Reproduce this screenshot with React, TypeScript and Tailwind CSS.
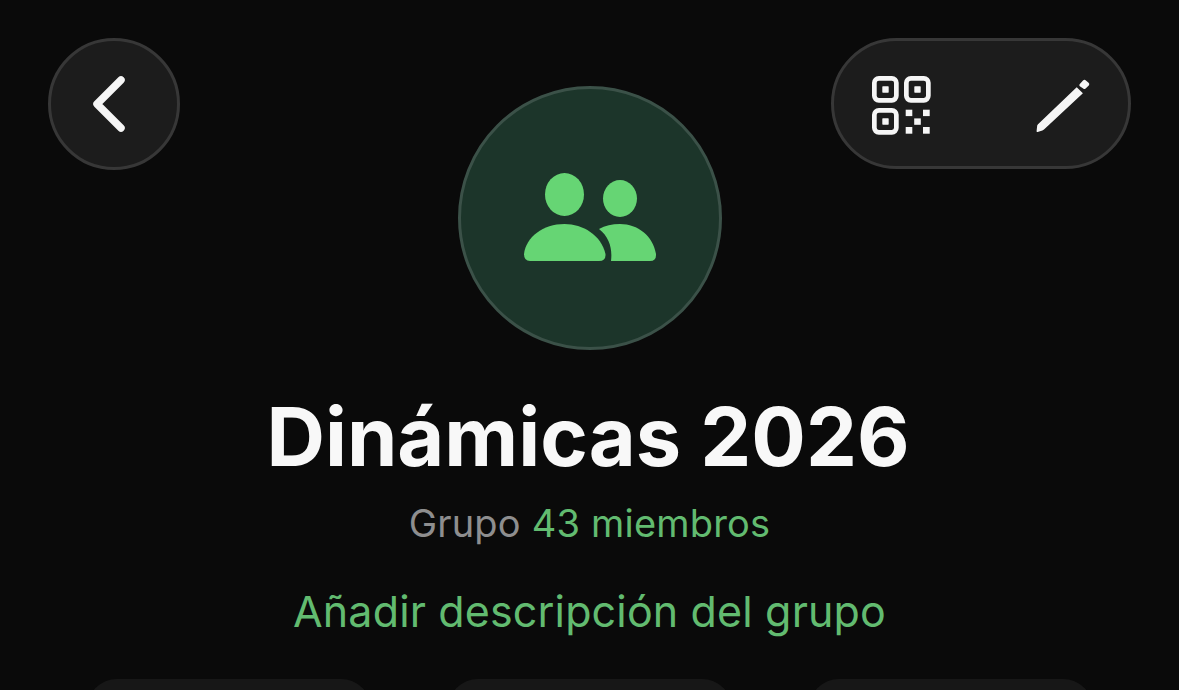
import React from "react";

const font = { fontFamily: "Inter, 'Noto Sans', sans-serif" };

function QrIcon() {
  return (
    <svg width="59" height="59" viewBox="0 0 59 59" fill="#f5f5f5">
      <g fill="none" stroke="#f5f5f5" strokeWidth="4.7">
        <rect x="2.35" y="2.35" width="22" height="22" rx="4.5" />
        <rect x="34.35" y="2.35" width="22" height="22" rx="4.5" />
        <rect x="2.35" y="34.35" width="22" height="22" rx="4.5" />
      </g>
      <rect x="10.3" y="10.3" width="6.4" height="6.4" rx="0.6" />
      <rect x="42.3" y="10.3" width="6.4" height="6.4" rx="0.6" />
      <rect x="10.3" y="42.3" width="6.4" height="6.4" rx="0.6" />
      <rect x="33.7" y="33.7" width="6.6" height="6.4" />
      <rect x="51" y="33.7" width="6.7" height="6.4" />
      <rect x="42.2" y="42.4" width="6.6" height="6.4" />
      <rect x="33.7" y="51" width="6.6" height="6.7" />
      <rect x="51" y="51" width="6.7" height="6.7" />
    </svg>
  );
}

function PencilIcon() {
  return (
    <svg width="54" height="54" viewBox="0 0 54 54" fill="#f5f5f5">
      <path d="M40.7 9.3 L46.9 15.2 L8 51.6 Q7.2 52.2 6.4 52.5 L1.6 53.9 Q0.3 54.2 0.6 52.9 L1.2 47.6 Q1.4 46.8 2 46.2 Z" />
      <path d="M43.6 6.2 L47 2.6 Q48.4 1.2 49.9 2.4 L52.6 4.7 Q54 6 52.8 7.5 L49.6 10.6 Q48.4 11.6 47.2 10.6 L43.8 8.2 Q42.9 7.2 43.6 6.2 Z" />
    </svg>
  );
}

function GroupIcon() {
  return (
    <svg width="134" height="90" viewBox="0 0 134 90" fill="#66d574">
      <ellipse cx="41.5" cy="21.5" rx="19.5" ry="21.5" />
      <ellipse cx="97" cy="25.5" rx="17" ry="18.5" />
      <path d="M7 88 Q1 88 1 81 C3 64 20 51 41.5 51 C60 51 78 62 82.5 81 Q83 88 76 88 Z" />
      <path d="M76 56 C82 52.5 89 51 97 51 C115 51 130 63 133 81 Q133.5 88 127 88 L88 88 C89.5 76 86.5 64 76 56 Z" />
    </svg>
  );
}

export default function App() {
  return (
    <div className="w-[1179px] h-[690px] overflow-hidden bg-[#0a0a0a] flex flex-col" style={font}>
      <div className="grid grid-cols-[1fr_auto_1fr] items-start px-[48px] pt-[38px]">
        <button className="w-[132px] h-[132px] rounded-full bg-[#1c1c1c] border-[3px] border-[#373737] flex items-center justify-center">
          <svg width="40" height="62" viewBox="0 0 40 62" fill="none" stroke="#f5f5f5" strokeWidth="7.5" strokeLinecap="round" strokeLinejoin="round" className="mr-[6px]">
            <path d="M30 7 L6 31 L30 55" />
          </svg>
        </button>
        <div className="pt-[48px]">
          <div className="w-[264px] h-[264px] rounded-full bg-[#1c352a] border-[3px] border-[#3b5148] flex items-center justify-center">
            <GroupIcon />
          </div>
        </div>
        <div className="flex justify-end">
          <div className="w-[300px] h-[131px] rounded-full bg-[#1c1c1c] border-[3px] border-[#373737] flex items-center justify-between pl-[38px] pr-[38px] pt-[3px]">
            <QrIcon />
            <PencilIcon />
          </div>
        </div>
      </div>
      <h1 className="mt-[41px] pr-[3px] text-center text-[81px] leading-[92px] font-bold text-[#f8f8f8]">Dinámicas 2026</h1>
      <p className="mt-[17px] text-center text-[38px] leading-[46px] tracking-[0.2px]">
        <span className="text-[#8e8e8f]">Grupo</span> <span className="text-[#62bb70]">43 miembros</span>
      </p>
      <p className="mt-[39px] text-center text-[43px] leading-[52px] tracking-[0.15px] text-[#62bb70]">Añadir descripción del grupo</p>
      <div className="mt-[42px] flex justify-center gap-[77px]">
        <div className="w-[284px] h-[60px] shrink-0 rounded-[44px] bg-[#171717]" />
        <div className="w-[284px] h-[60px] shrink-0 rounded-[44px] bg-[#171717]" />
        <div className="w-[284px] h-[60px] shrink-0 rounded-[44px] bg-[#171717]" />
      </div>
    </div>
  );
}
